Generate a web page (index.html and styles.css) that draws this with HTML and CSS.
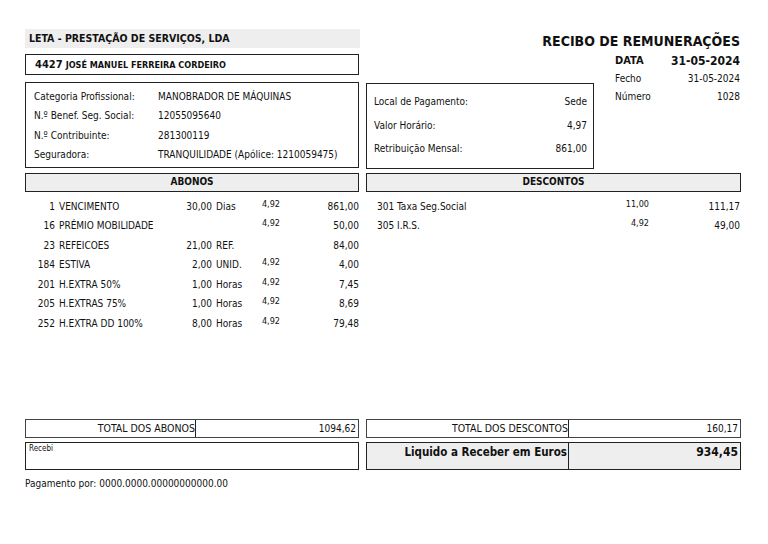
FILE: index.html
```html
<!DOCTYPE html>
<html lang="pt">
<head>
<meta charset="utf-8">
<title>Recibo de Remunerações</title>
<link rel="stylesheet" href="styles.css">
</head>
<body>
<div class="page">
  <div class="top">
    <div class="left-top">
      <div class="company">LETA - PRESTAÇÃO DE SERVIÇOS, LDA</div>
      <div class="name-box"><span class="emp-no">4427</span> <span class="emp-name">JOSÉ MANUEL FERREIRA CORDEIRO</span></div>
      <div class="info-box">
        <div class="info-row"><span class="info-label">Categoria Profissional:</span><span>MANOBRADOR DE MÁQUINAS</span></div>
        <div class="info-row"><span class="info-label">N.º Benef. Seg. Social:</span><span>12055095640</span></div>
        <div class="info-row"><span class="info-label">N.º Contribuinte:</span><span>281300119</span></div>
        <div class="info-row"><span class="info-label">Seguradora:</span><span>TRANQUILIDADE (Apólice: 1210059475)</span></div>
      </div>
    </div>
    <div class="right-top">
      <div class="title">RECIBO DE REMUNERAÇÕES</div>
      <div class="right-row">
        <div class="pay-box">
          <div class="pay-row"><span>Local de Pagamento:</span><span>Sede</span></div>
          <div class="pay-row"><span>Valor Horário:</span><span>4,97</span></div>
          <div class="pay-row"><span>Retribuição Mensal:</span><span>861,00</span></div>
        </div>
        <div class="meta">
          <div class="meta-row meta-main"><span>DATA</span><span class="meta-date">31-05-2024</span></div>
          <div class="meta-row"><span>Fecho</span><span>31-05-2024</span></div>
          <div class="meta-row"><span>Número</span><span>1028</span></div>
        </div>
      </div>
    </div>
  </div>

  <div class="cols">
    <div class="section-head">ABONOS</div>
    <div class="section-head">DESCONTOS</div>
  </div>

  <div class="cols lists">
    <div class="abonos">
      <div class="ab-row"><span class="c-code">1</span><span class="c-desc">VENCIMENTO</span><span class="c-qty">30,00</span><span class="c-unit">Dias</span><span class="c-price">4,92</span><span class="c-amt">861,00</span></div>
      <div class="ab-row"><span class="c-code">16</span><span class="c-desc">PRÉMIO MOBILIDADE</span><span class="c-qty"></span><span class="c-unit"></span><span class="c-price">4,92</span><span class="c-amt">50,00</span></div>
      <div class="ab-row"><span class="c-code">23</span><span class="c-desc">REFEICOES</span><span class="c-qty">21,00</span><span class="c-unit">REF.</span><span class="c-price"></span><span class="c-amt">84,00</span></div>
      <div class="ab-row"><span class="c-code">184</span><span class="c-desc">ESTIVA</span><span class="c-qty">2,00</span><span class="c-unit">UNID.</span><span class="c-price">4,92</span><span class="c-amt">4,00</span></div>
      <div class="ab-row"><span class="c-code">201</span><span class="c-desc">H.EXTRA 50%</span><span class="c-qty">1,00</span><span class="c-unit">Horas</span><span class="c-price">4,92</span><span class="c-amt">7,45</span></div>
      <div class="ab-row"><span class="c-code">205</span><span class="c-desc">H.EXTRAS 75%</span><span class="c-qty">1,00</span><span class="c-unit">Horas</span><span class="c-price">4,92</span><span class="c-amt">8,69</span></div>
      <div class="ab-row"><span class="c-code">252</span><span class="c-desc">H.EXTRA DD 100%</span><span class="c-qty">8,00</span><span class="c-unit">Horas</span><span class="c-price">4,92</span><span class="c-amt">79,48</span></div>
    </div>
    <div class="descontos">
      <div class="de-row"><span class="d-desc">301 Taxa Seg.Social</span><span class="c-price">11,00</span><span class="c-amt">111,17</span></div>
      <div class="de-row"><span class="d-desc">305 I.R.S.</span><span class="c-price">4,92</span><span class="c-amt">49,00</span></div>
    </div>
  </div>

  <div class="cols totals">
    <div class="total-box"><span class="t-label">TOTAL DOS ABONOS</span><span class="t-value">1094,62</span></div>
    <div class="total-box total-right"><span class="t-label">TOTAL DOS DESCONTOS</span><span class="t-value">160,17</span></div>
  </div>

  <div class="cols finals">
    <div class="recebi">Recebi</div>
    <div class="liquido"><span class="l-label">Liquido a Receber em Euros</span><span class="l-value">934,45</span></div>
  </div>

  <div class="pagamento">Pagamento por: 0000.0000.00000000000.00</div>
</div>
</body>
</html>
```
FILE: styles.css
```css
* { box-sizing: border-box; }
html, body { margin: 0; padding: 0; background: #fff; }
body {
  font-family: "DejaVu Sans Condensed", "DejaVu Sans", sans-serif;
  font-stretch: condensed;
  font-size: 10px;
  color: #111;
}
.page { width: 716px; margin-left: 25px; padding-top: 29px; }

.top { display: grid; grid-template-columns: 335px 375px; column-gap: 6px; }
.left-top { display: flex; flex-direction: column; }
.company {
  background: #eeeeee;
  height: 19px;
  line-height: 19px;
  padding-left: 4px;
  font-weight: bold;
  font-size: 10.5px;
}
.name-box {
  margin-top: 6px;
  border: 1px solid #222;
  height: 21px;
  line-height: 19px;
  padding-left: 9px;
  font-weight: bold;
  width: 334px;
}
.emp-no { font-size: 11px; }
.emp-name { font-size: 9px; }
.info-box {
  margin-top: 7px;
  border: 1px solid #222;
  height: 86px;
  padding: 4px 0 0 8px;
  width: 334px;
}
.info-row { display: flex; height: 19.3px; line-height: 19.3px; }
.info-label { width: 124px; }

.right-top { display: flex; flex-direction: column; }
.title {
  text-align: right;
  font-weight: bold;
  font-size: 14px;
  line-height: 20px;
  height: 20px;
  padding-top: 2px;
  padding-right: 1px;
  box-sizing: content-box;
}
.right-row { display: flex; justify-content: space-between; margin-top: 1px; }
.pay-box {
  margin-top: 31px;
  border: 1px solid #222;
  width: 228px;
  height: 86px;
  padding: 6px 6px 0 7px;
}
.pay-row { display: flex; justify-content: space-between; height: 23.5px; line-height: 23.5px; }
.meta { width: 126px; padding-right: 1px; }
.meta-row { display: flex; justify-content: space-between; height: 18px; line-height: 18px; }
.meta-main { font-weight: bold; font-size: 11px; }
.meta-date { font-size: 12px; }

.cols { display: grid; grid-template-columns: 335px 375px; column-gap: 6px; }
.section-head {
  margin-top: 4px;
  background: #eeeeee;
  border: 1px solid #222;
  height: 19px;
  line-height: 15px;
  text-align: center;
  font-weight: bold;
  font-size: 10px;
}
.section-head:first-child { width: 334px; }

.lists { height: 227px; padding-top: 5px; }
.ab-row {
  display: grid;
  grid-template-columns: 30px 117px 40px 46px 24px 1fr;
  height: 19.45px;
  line-height: 19.45px;
}
.c-code { text-align: right; }
.c-desc { padding-left: 4px; }
.c-qty { text-align: right; }
.c-unit { padding-left: 4px; }
.c-price { text-align: right; font-size: 9px; position: relative; top: -2px; }
.ab-row .c-price { margin-right: 2px; margin-left: -4px; }
.c-amt { text-align: right; padding-right: 1px; }
.descontos { padding-left: 11px; }
.de-row {
  display: grid;
  grid-template-columns: 1fr 50px 92px;
  height: 19.45px;
  line-height: 19.45px;
}

.total-box {
  display: grid;
  grid-template-columns: 170px 1fr;
  border: 1px solid #444;
  height: 19px;
  line-height: 17px;
  font-size: 10.5px;
}
.total-box:first-child { width: 334px; }
.total-right { grid-template-columns: 202px 1fr; }
.t-label { text-align: right; border-right: 1px solid #222; padding-right: 0; }
.t-value { text-align: right; padding-right: 2px; font-size: 10px; }

.finals { margin-top: 4px; }
.recebi {
  border: 1px solid #222;
  height: 28px;
  font-size: 8px;
  padding: 1px 3px;
  width: 334px;
}
.liquido {
  display: grid;
  grid-template-columns: 202px 1fr;
  border: 1px solid #222;
  background: #eeeeee;
  height: 28px;
  font-weight: bold;
  font-size: 11.5px;
  line-height: 18px;
}
.l-label { text-align: right; border-right: 1px solid #222; padding-right: 1px; }
.l-value { text-align: right; padding-right: 2px; font-size: 12px; }

.pagamento { margin-top: 7px; line-height: 14px; }
```
